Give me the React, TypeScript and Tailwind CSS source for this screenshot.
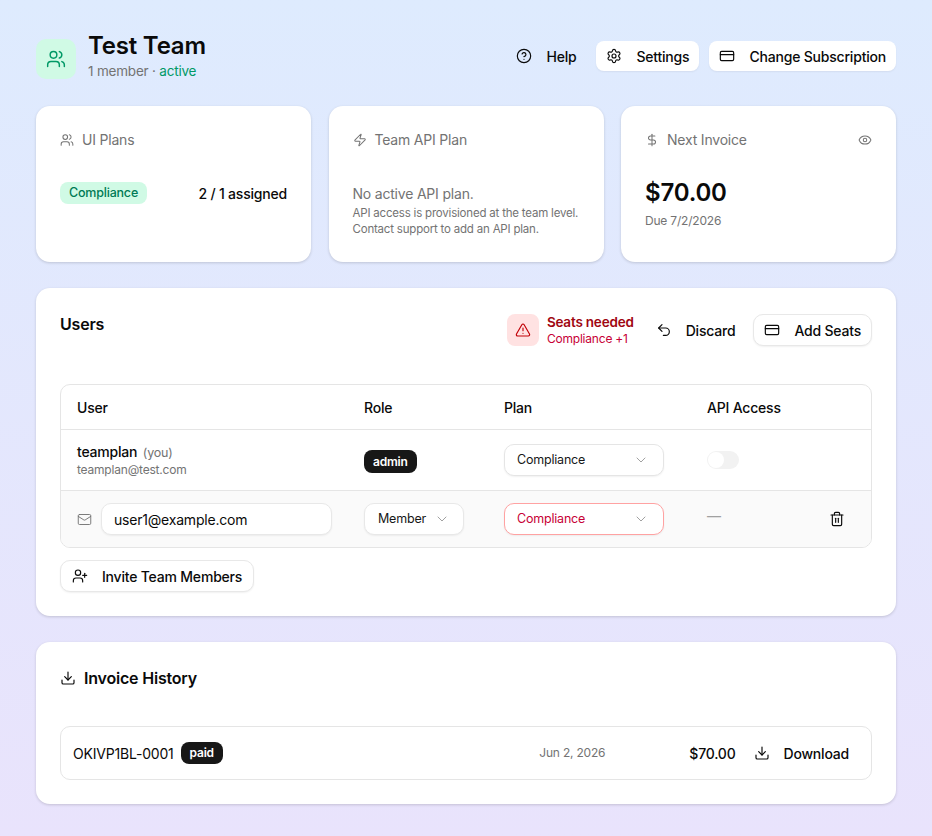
import {
  ChevronDown,
  CircleHelp,
  CreditCard,
  DollarSign,
  Download,
  Eye,
  Mail,
  Settings,
  Trash2,
  TriangleAlert,
  Undo2,
  UserPlus,
  Users,
  Zap,
} from "lucide-react";

const cardClass = "rounded-[14px] bg-white shadow-[0_1px_3px_rgba(0,0,0,0.16)]";
const outlineClass = "rounded-[10px] border border-[#e8e8e8] bg-white shadow-[0_1px_2px_rgba(0,0,0,0.06)]";

const PlanSelect = ({ error }: { error?: boolean }) => (
  <div
    className={`flex h-8 w-40 items-center justify-between rounded-[10px] border bg-white pl-3 pr-[14px] text-[12.5px] shadow-[0_1px_2px_rgba(0,0,0,0.06)] ${
      error ? "border-[#ffa2a2] text-[#c70036]" : "border-[#e5e5e5] text-[#171717]"
    }`}
  >
    <span>Compliance</span>
    <ChevronDown className="h-4 w-4 text-[#a1a1a1]" strokeWidth={1.5} />
  </div>
);

export default function App() {
  return (
    <div className="min-h-[836px] bg-gradient-to-b from-[#deebfe] to-[#e9e3fc] px-9 pt-[32px] pb-8 font-['Inter',sans-serif] text-[#0a0a0a] tracking-[-0.2px]">
      {/* Header */}
      <div className="flex h-[48px] items-center justify-between">
        <div className="flex items-center gap-3">
          <div className="mt-[6px] flex h-10 w-10 items-center justify-center rounded-[10px] bg-[#d0fae5]">
            <Users className="h-5 w-5 text-[#009966]" strokeWidth={1.75} />
          </div>
          <div>
            <h1 className="text-[24px] leading-[28px] font-semibold">Test Team</h1>
            <p className="mt-[1px] text-[13.5px] leading-[20px] text-[#737373]">
              1 member · <span className="text-[#009966]">active</span>
            </p>
          </div>
        </div>
        <div className="flex items-center gap-[10px] text-[14px] font-medium">
          <div className="flex h-[30px] items-center gap-[14px] px-[10px]">
            <CircleHelp className="h-4 w-4" strokeWidth={1.75} />
            <span>Help</span>
          </div>
          <div className="flex h-[30px] items-center gap-[14px] rounded-[8px] bg-white px-[10px] shadow-[0_1px_2px_rgba(0,0,0,0.06)]">
            <Settings className="h-4 w-4" strokeWidth={1.75} />
            <span>Settings</span>
          </div>
          <div className="flex h-[30px] items-center gap-[14px] rounded-[8px] bg-white px-[10px] shadow-[0_1px_2px_rgba(0,0,0,0.06)]">
            <CreditCard className="h-4 w-4" strokeWidth={1.75} />
            <span>Change Subscription</span>
          </div>
        </div>
      </div>

      {/* Summary cards */}
      <div className="mt-[26px] grid grid-cols-3 gap-[17.5px]">
        <div className={`${cardClass} h-[156px] p-6`}>
          <div className="flex items-center gap-2 text-[14px] leading-5 text-[#737373]">
            <Users className="h-[14px] w-[14px]" strokeWidth={1.75} />
            <span>UI Plans</span>
          </div>
          <div className="mt-[32px] flex items-center justify-between">
            <span className="rounded-[8px] bg-[#d0fae5] px-[9px] py-[3px] text-[12.5px] leading-4 font-medium text-[#007a55]">Compliance</span>
            <span className="text-[14px] font-medium">2 / 1 assigned</span>
          </div>
        </div>
        <div className={`${cardClass} h-[156px] p-6`}>
          <div className="flex items-center gap-2 text-[14px] leading-5 text-[#737373]">
            <Zap className="h-[14px] w-[14px]" strokeWidth={1.75} />
            <span>Team API Plan</span>
          </div>
          <p className="mt-[34px] text-[14px] leading-5 text-[#737373]">No active API plan.</p>
          <p className="mt-[1px] text-[11.5px] leading-4 text-[#737373]">
            API access is provisioned at the team level. Contact support to add an API plan.
          </p>
        </div>
        <div className={`${cardClass} h-[156px] p-6`}>
          <div className="flex items-center justify-between text-[14px] leading-5 text-[#737373]">
            <div className="flex items-center gap-2">
              <DollarSign className="h-[14px] w-[14px]" strokeWidth={1.75} />
              <span>Next Invoice</span>
            </div>
            <Eye className="h-[14px] w-[14px]" strokeWidth={1.75} />
          </div>
          <p className="mt-[27px] text-[24px] leading-8 font-semibold">$70.00</p>
          <p className="mt-[4px] text-[12px] leading-4 text-[#737373]">Due 7/2/2026</p>
        </div>
      </div>

      {/* Users */}
      <div className={`${cardClass} mt-[26px] h-[328px] px-6 pt-[26px]`}>
        <div className="flex h-[32px] items-start justify-between">
          <h2 className="text-[16px] leading-5 font-semibold">Users</h2>
          <div className="flex items-center text-[14px] font-medium">
            <div className="flex h-8 w-8 items-center justify-center rounded-[8px] bg-[#ffe2e2]">
              <TriangleAlert className="h-4 w-4 text-[#c10007]" strokeWidth={1.75} />
            </div>
            <div className="ml-[8px]">
              <p className="text-[13.5px] leading-[17px] font-semibold text-[#9f0712]">Seats needed</p>
              <p className="text-[12px] leading-[15px] font-normal text-[#c70036]">Compliance +1</p>
            </div>
            <div className="ml-[12px] flex h-8 items-center gap-[14px] px-[10px]">
              <Undo2 className="h-4 w-4" strokeWidth={1.75} />
              <span>Discard</span>
            </div>
            <div className={`${outlineClass} ml-[8px] flex h-8 items-center gap-[14px] px-[10px]`}>
              <CreditCard className="h-4 w-4" strokeWidth={1.75} />
              <span>Add Seats</span>
            </div>
          </div>
        </div>

        <div className="mt-[38px] overflow-hidden rounded-[10px] border border-[#e5e5e5]">
          <div className="grid h-[45px] grid-cols-[287px_140px_203px_1fr] items-center border-b border-[#e5e5e5] px-4 text-[14px] font-medium">
            <span>User</span>
            <span>Role</span>
            <span>Plan</span>
            <span>API Access</span>
          </div>
          <div className="grid h-[61px] grid-cols-[287px_140px_203px_1fr] items-center border-b border-[#e5e5e5] px-4">
            <div>
              <p className="text-[14px] leading-[18px] font-medium">
                teamplan <span className="ml-[2px] text-[12.5px] font-normal text-[#737373]">(you)</span>
              </p>
              <p className="text-[12px] leading-4 text-[#737373]">teamplan@test.com</p>
            </div>
            <div>
              <span className="rounded-[8px] bg-[#171717] px-[9px] py-[4px] text-[12px] leading-4 font-semibold text-white">admin</span>
            </div>
            <PlanSelect />
            <div className="h-[18px] w-8 rounded-full bg-[#f2f2f2] p-[1px]">
              <div className="h-4 w-4 rounded-full bg-white" />
            </div>
          </div>
          <div className="grid h-[56px] grid-cols-[287px_140px_203px_1fr] items-center bg-[#fafafa] px-4">
            <div className="flex items-center gap-[9px]">
              <Mail className="h-[15px] w-[15px] text-[#737373]" strokeWidth={1.5} />
              <div className={`${outlineClass} flex h-8 w-[231px] items-center px-3 text-[14px]`}>user1@example.com</div>
            </div>
            <div className={`${outlineClass} flex h-8 w-[100px] items-center justify-between pl-[13px] pr-[13px] text-[12.5px] text-[#171717]`}>
              <span>Member</span>
              <ChevronDown className="h-4 w-4 text-[#a1a1a1]" strokeWidth={1.5} />
            </div>
            <PlanSelect error />
            <div className="flex items-center justify-between pr-[10px]">
              <span className="-mt-[8px] text-[14px] text-[#a1a1a1]">—</span>
              <Trash2 className="h-4 w-4" strokeWidth={1.75} />
            </div>
          </div>
        </div>

        <div className={`${outlineClass} mt-3 flex h-8 w-fit items-center gap-[14px] px-[11px] text-[14px] font-medium`}>
          <UserPlus className="h-4 w-4" strokeWidth={1.75} />
          <span>Invite Team Members</span>
        </div>
      </div>

      {/* Invoice history */}
      <div className={`${cardClass} mt-[26px] h-[162px] px-6 pt-[26px]`}>
        <div className="flex items-center gap-2">
          <Download className="h-4 w-4" strokeWidth={1.75} />
          <h2 className="text-[16px] leading-5 font-semibold">Invoice History</h2>
        </div>
        <div className="mt-[38px] flex h-[54px] items-center rounded-[10px] border border-[#e5e5e5] pl-3 pr-[12px]">
          <span className="text-[14px]">OKIVP1BL-0001</span>
          <span className="ml-[7px] rounded-[8px] bg-[#171717] px-[9px] py-[3px] text-[12px] leading-4 font-semibold text-white">paid</span>
          <span className="ml-auto text-[12px] text-[#737373]">Jun 2, 2026</span>
          <span className="ml-[84px] text-[14px] font-medium">$70.00</span>
          <div className="ml-[8px] flex h-8 items-center gap-[14px] px-[10px] text-[14px] font-medium">
            <Download className="h-4 w-4" strokeWidth={1.75} />
            <span>Download</span>
          </div>
        </div>
      </div>
    </div>
  );
}
